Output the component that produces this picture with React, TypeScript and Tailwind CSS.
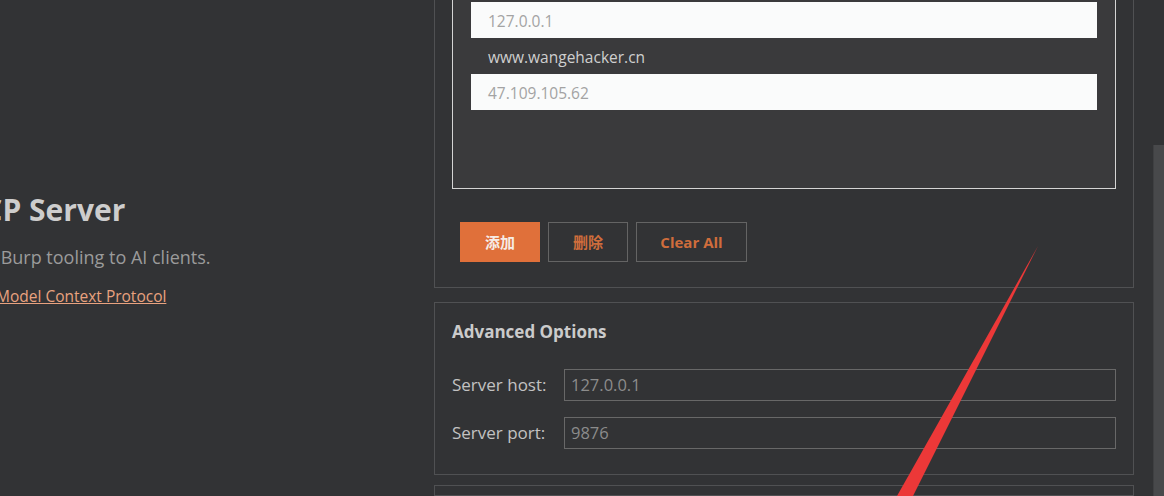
import React from "react";

const hosts = [
  { value: "127.0.0.1", light: true },
  { value: "www.wangehacker.cn", light: false },
  { value: "47.109.105.62", light: true },
];

function HostList() {
  return (
    <div className="h-[205px] border border-[#d4d4d4] bg-[#3a3a3c] px-[18px] pt-[17px]">
      {hosts.map((h) => (
        <div
          key={h.value}
          className={
            h.light
              ? "flex h-[36px] items-center bg-[#fafbfb] px-[17px] pt-[3px] text-[15.5px] text-[#a3a3a3]"
              : "flex h-[36px] items-center px-[17px] pt-[3px] text-[15.5px] text-[#cfcfcf]"
          }
        >
          {h.value}
        </div>
      ))}
    </div>
  );
}

function Field({ label, value }: { label: string; value: string }) {
  return (
    <div className="flex items-center">
      <div className="w-[112px] text-[17px] text-[#c2c2c2]">{label}</div>
      <div className="flex h-[32px] flex-1 items-center border border-[#686868] px-[6px] text-[16.5px] text-[#8c8c8c]">
        {value}
      </div>
    </div>
  );
}

export default function App() {
  return (
    <div
      className="relative flex h-[496px] w-[1164px] overflow-hidden bg-[#323335]"
      style={{ fontFamily: '"Open Sans", "Noto Sans CJK SC", sans-serif' }}
    >
      {/* left intro, scrolled partly out of view */}
      <div className="flex w-[434px] shrink-0 flex-col pt-[190px]">
        <div className="ml-[-45px] whitespace-nowrap text-[30px] font-bold leading-[40px] text-[#cdcdcd]">
          MCP Server
        </div>
        <div className="ml-[-64px] mt-[15px] whitespace-nowrap text-[18px] leading-[24px] text-[#9b9b9b]">
          Expose Burp tooling to AI clients.
        </div>
        <div className="ml-[-4px] mt-[17px] whitespace-nowrap text-[15.5px] leading-[20px]">
          <a className="text-[#e9a27f] underline">Model Context Protocol</a>
        </div>
      </div>

      {/* settings panels */}
      <div className="mt-[-34px] flex w-[700px] shrink-0 flex-col">
        <div className="border border-[#505153] px-[17px] pb-[25px] pt-[17px]">
          <HostList />
          <div className="ml-[8px] mt-[33px] flex gap-[8px]">
            <button className="h-[40px] w-[80px] bg-[#e0703a] text-[15px] font-bold text-[#f6ece6]">
              添加
            </button>
            <button className="h-[40px] w-[80px] border border-[#646464] text-[15px] font-bold text-[#cf6d3c]">
              删除
            </button>
            <button className="h-[40px] w-[111px] border border-[#646464] text-[15px] font-bold text-[#cf6d3c]">
              Clear All
            </button>
          </div>
        </div>

        <div className="mt-[14px] border border-[#505153] px-[17px] pb-[25px] pt-[17px]">
          <div className="text-[17px] font-bold leading-[24px] text-[#cbcbcb]">Advanced Options</div>
          <div className="mt-[25px] flex flex-col gap-[16px]">
            <Field label="Server host:" value="127.0.0.1" />
            <Field label="Server port:" value="9876" />
          </div>
        </div>

        <div className="mt-[10px] h-[40px] border border-[#505153]" />
      </div>

      {/* scrollbar */}
      <div className="flex w-[30px] shrink-0 justify-end pt-[145px]">
        <div className="h-full w-[11px] border-l border-[#3f4042] bg-[#48494b]" />
      </div>

      {/* red annotation arrow */}
      <svg className="pointer-events-none absolute left-0 top-0" width="1164" height="496">
        <polygon points="1038,246 897,496 913,496" fill="#ec3838" />
      </svg>
    </div>
  );
}
